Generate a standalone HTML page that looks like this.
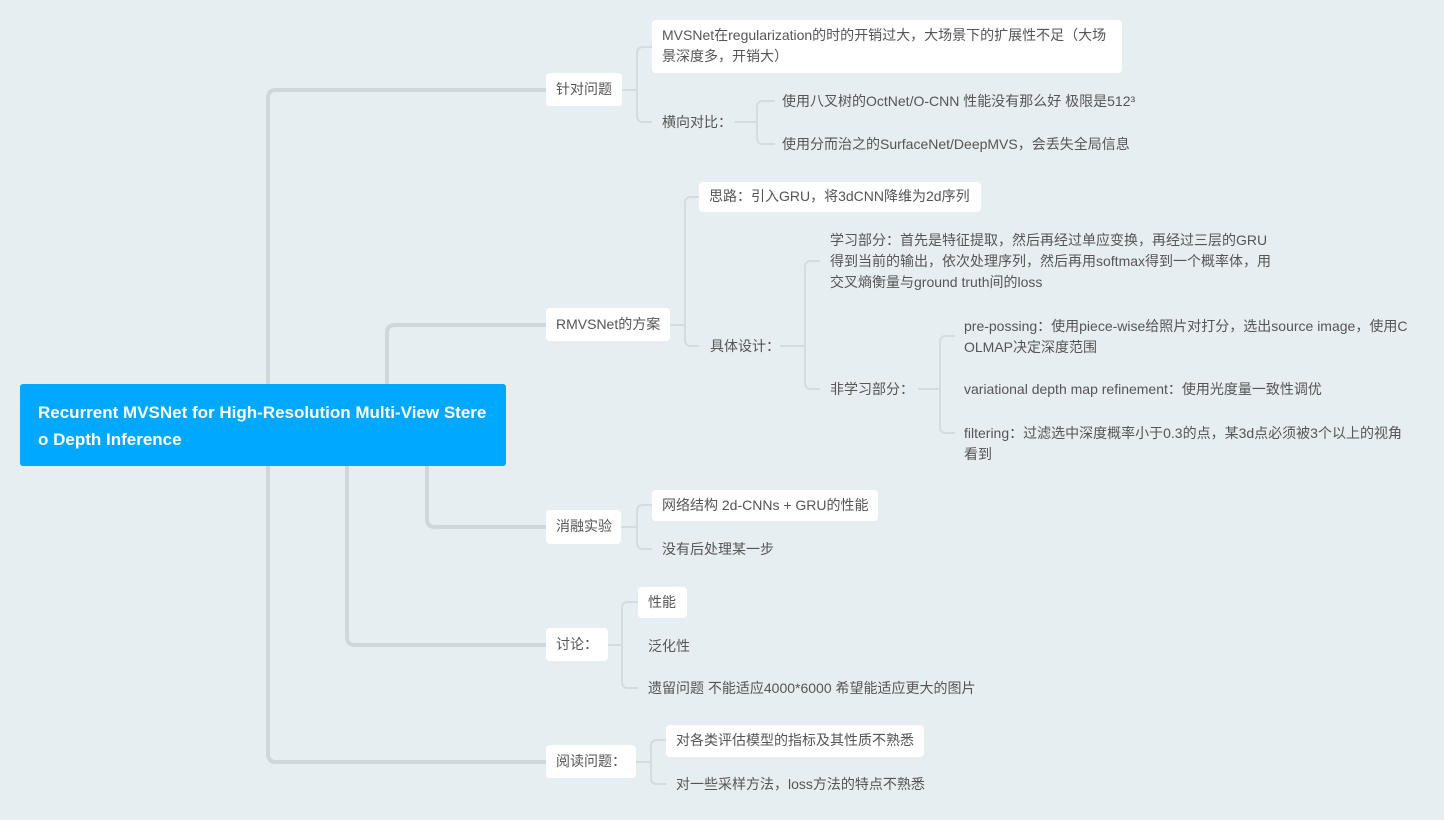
<!DOCTYPE html>
<html><head><meta charset="utf-8"><style>
body{margin:0;width:1444px;height:820px;background:#e7eef1;position:relative;overflow:hidden;font-family:"Liberation Sans","Noto Sans CJK SC",sans-serif;}
svg{position:absolute;left:0;top:0}
.n{position:absolute;font-size:14px;color:#555;line-height:21px;white-space:nowrap}
.b{background:#fff;border-radius:4px;box-sizing:border-box;padding:6px 10px}
.root{position:absolute;left:20px;top:384px;width:486px;height:82px;background:#00a8ff;border-radius:3px;color:#fff;font-size:17px;line-height:27px;padding:15px 18px;box-sizing:border-box;font-weight:bold;white-space:nowrap}
</style></head><body>
<svg width="1444" height="820" fill="none">
<g stroke="#d0d7db" stroke-width="4" stroke-linecap="round">
<path d="M268 384 V98 Q268 90 276 90 H546"/>
<path d="M268 466 V754 Q268 762 276 762 H546"/>
<path d="M387 384 V333 Q387 325 395 325 H546"/>
<path d="M427 466 V519 Q427 527 435 527 H546"/>
<path d="M347 466 V637 Q347 645 355 645 H546"/>
</g>
<g stroke="#d5dcdf" stroke-width="2">
<path d="M622 90 H637 M652 47 H643 Q637 47 637 53 V116 Q637 122 643 122 H652"/>
<path d="M735 122 H757 M775 101 H763 Q757 101 757 107 V138 Q757 144 763 144 H775"/>
<path d="M670 325 H685 M699 197 H691 Q685 197 685 203 V340 Q685 346 691 346 H699"/>
<path d="M780 346 H805 M820 261 H811 Q805 261 805 267 V383 Q805 389 811 389 H820"/>
<path d="M918 389 H940 M955 336 H946 Q940 336 940 342 V427 Q940 433 946 433 H955"/>
<path d="M620 527 H637 M652 505 H643 Q637 505 637 511 V543 Q637 549 643 549 H652"/>
<path d="M607 645 H622 M638 602 H628 Q622 602 622 608 V682 Q622 688 628 688 H638"/>
<path d="M636 762 H651 M666 740 H657 Q651 740 651 746 V778 Q651 784 657 784 H666"/>
</g>
</svg>
<div class="root">Recurrent MVSNet for High-Resolution Multi-View Stere<br>o Depth Inference</div>

<div class="n b" style="left:546px;top:73px;width:76px;height:33px">针对问题</div>
<div class="n b" style="left:652px;top:20px;width:470px;height:53px;padding:5px 10px;">MVSNet在regularization的时的开销过大，大场景下的扩展性不足（大场<br>景深度多，开销大）</div>
<div class="n" style="left:662px;top:112px">横向对比：</div>
<div class="n" style="left:782px;top:91px">使用八叉树的OctNet/O-CNN 性能没有那么好 极限是512³</div>
<div class="n" style="left:782px;top:134px">使用分而治之的SurfaceNet/DeepMVS，会丢失全局信息</div>

<div class="n b" style="left:546px;top:308px;width:124px;height:33px">RMVSNet的方案</div>
<div class="n b" style="left:699px;top:182px;width:282px;height:30px;padding-top:4px">思路：引入GRU，将3dCNN降维为2d序列</div>
<div class="n" style="left:830px;top:230px">学习部分：首先是特征提取，然后再经过单应变换，再经过三层的GRU<br>得到当前的输出，依次处理序列，然后再用softmax得到一个概率体，用<br>交叉熵衡量与ground truth间的loss</div>
<div class="n" style="left:710px;top:336px">具体设计：</div>
<div class="n" style="left:830px;top:379px">非学习部分：</div>
<div class="n" style="left:964px;top:316px">pre-possing：使用piece-wise给照片对打分，选出source image，使用C<br>OLMAP决定深度范围</div>
<div class="n" style="left:964px;top:379px">variational depth map refinement：使用光度量一致性调优</div>
<div class="n" style="left:964px;top:423px">filtering：过滤选中深度概率小于0.3的点，某3d点必须被3个以上的视角<br>看到</div>

<div class="n b" style="left:546px;top:510px;width:75px;height:34px">消融实验</div>
<div class="n b" style="left:652px;top:490px;width:226px;height:31px;padding-top:5px">网络结构 2d-CNNs + GRU的性能</div>
<div class="n" style="left:662px;top:539px">没有后处理某一步</div>

<div class="n b" style="left:546px;top:628px;width:62px;height:33px">讨论：</div>
<div class="n b" style="left:638px;top:587px;width:49px;height:31px;padding-top:5px">性能</div>
<div class="n" style="left:648px;top:636px">泛化性</div>
<div class="n" style="left:648px;top:678px">遗留问题 不能适应4000*6000 希望能适应更大的图片</div>

<div class="n b" style="left:546px;top:745px;width:90px;height:33px">阅读问题：</div>
<div class="n b" style="left:666px;top:725px;width:258px;height:32px;padding-top:5px">对各类评估模型的指标及其性质不熟悉</div>
<div class="n" style="left:676px;top:774px">对一些采样方法，loss方法的特点不熟悉</div>
</body></html>
